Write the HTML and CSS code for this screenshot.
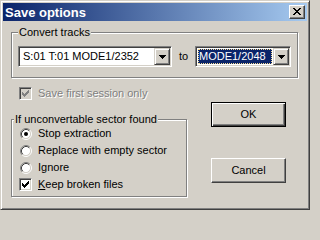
FILE: index.html
```html
<!DOCTYPE html>
<html>
<head>
<meta charset="utf-8">
<title>Save options</title>
<link rel="stylesheet" href="styles.css">
</head>
<body>
<div class="window">
  <div class="titlebar">
    <span class="title">Save options</span>
    <div class="close-btn">
      <svg class="x-glyph" width="8" height="7" viewBox="0 0 8 7" shape-rendering="crispEdges">
        <rect x="0" y="0" width="2" height="1"/><rect x="6" y="0" width="2" height="1"/>
        <rect x="1" y="1" width="2" height="1"/><rect x="5" y="1" width="2" height="1"/>
        <rect x="2" y="2" width="4" height="1"/>
        <rect x="3" y="3" width="2" height="1"/>
        <rect x="2" y="4" width="4" height="1"/>
        <rect x="1" y="5" width="2" height="1"/><rect x="5" y="5" width="2" height="1"/>
        <rect x="0" y="6" width="2" height="1"/><rect x="6" y="6" width="2" height="1"/>
      </svg>
    </div>
  </div>
  <div class="body">
    <div class="group group-convert">
      <span class="legend">Convert tracks</span>
      <div class="convert-row">
        <div class="combo combo-src">
          <span class="combo-text">S:01 T:01 MODE1/2352</span>
          <span class="drop-btn"><svg width="7" height="4" viewBox="0 0 7 4" shape-rendering="crispEdges"><path d="M0 0h7v1h-1v1h-1v1h-1v1h-1v-1h-1v-1h-1v-1h-1z"/></svg></span>
        </div>
        <span class="to">to</span>
        <div class="combo combo-dst">
          <span class="combo-text"><span class="selected">MODE1/2048</span></span>
          <span class="drop-btn"><svg width="7" height="4" viewBox="0 0 7 4" shape-rendering="crispEdges"><path d="M0 0h7v1h-1v1h-1v1h-1v1h-1v-1h-1v-1h-1v-1h-1z"/></svg></span>
        </div>
      </div>
    </div>
    <div class="main">
      <div class="left">
        <div class="check-row first-session disabled">
          <span class="box box-disabled">
            <svg class="check" width="7" height="7" viewBox="0 0 7 7" shape-rendering="crispEdges">
              <rect x="0" y="2" width="1" height="3"/><rect x="1" y="3" width="1" height="3"/><rect x="2" y="4" width="1" height="3"/><rect x="3" y="3" width="1" height="3"/><rect x="4" y="2" width="1" height="3"/><rect x="5" y="1" width="1" height="3"/><rect x="6" y="0" width="1" height="3"/>
            </svg>
          </span>
          <span class="label">Save first session only</span>
        </div>
        <div class="group group-sector">
          <span class="legend">If unconvertable sector found</span>
          <div class="opt-row">
            <span class="radio-wrap"><svg class="radio" width="12" height="12" viewBox="0 0 12 12">
              <circle cx="6" cy="6" r="4.5" fill="#fff"/>
              <path d="M2.11 9.89A5.5 5.5 0 0 1 9.89 2.11" fill="none" stroke="#808080"/>
              <path d="M9.89 2.11A5.5 5.5 0 0 1 2.11 9.89" fill="none" stroke="#fff"/>
              <path d="M2.82 9.18A4.5 4.5 0 0 1 9.18 2.82" fill="none" stroke="#404040"/>
              <path d="M9.18 2.82A4.5 4.5 0 0 1 2.82 9.18" fill="none" stroke="#d4d0c8"/>
              <circle cx="6" cy="6" r="2" fill="#000"/>
            </svg></span>
            <span class="label">Stop extraction</span>
          </div>
          <div class="opt-row">
            <span class="radio-wrap"><svg class="radio" width="12" height="12" viewBox="0 0 12 12">
              <circle cx="6" cy="6" r="4.5" fill="#fff"/>
              <path d="M2.11 9.89A5.5 5.5 0 0 1 9.89 2.11" fill="none" stroke="#808080"/>
              <path d="M9.89 2.11A5.5 5.5 0 0 1 2.11 9.89" fill="none" stroke="#fff"/>
              <path d="M2.82 9.18A4.5 4.5 0 0 1 9.18 2.82" fill="none" stroke="#404040"/>
              <path d="M9.18 2.82A4.5 4.5 0 0 1 2.82 9.18" fill="none" stroke="#d4d0c8"/>
            </svg></span>
            <span class="label">Replace with empty sector</span>
          </div>
          <div class="opt-row">
            <span class="radio-wrap"><svg class="radio" width="12" height="12" viewBox="0 0 12 12">
              <circle cx="6" cy="6" r="4.5" fill="#fff"/>
              <path d="M2.11 9.89A5.5 5.5 0 0 1 9.89 2.11" fill="none" stroke="#808080"/>
              <path d="M9.89 2.11A5.5 5.5 0 0 1 2.11 9.89" fill="none" stroke="#fff"/>
              <path d="M2.82 9.18A4.5 4.5 0 0 1 9.18 2.82" fill="none" stroke="#404040"/>
              <path d="M9.18 2.82A4.5 4.5 0 0 1 2.82 9.18" fill="none" stroke="#d4d0c8"/>
            </svg></span>
            <span class="label">Ignore</span>
          </div>
          <div class="opt-row">
            <span class="box">
              <svg class="check" width="7" height="7" viewBox="0 0 7 7" shape-rendering="crispEdges">
                <rect x="0" y="2" width="1" height="3"/><rect x="1" y="3" width="1" height="3"/><rect x="2" y="4" width="1" height="3"/><rect x="3" y="3" width="1" height="3"/><rect x="4" y="2" width="1" height="3"/><rect x="5" y="1" width="1" height="3"/><rect x="6" y="0" width="1" height="3"/>
              </svg>
            </span>
            <span class="label"><u>K</u>eep broken files</span>
          </div>
        </div>
      </div>
      <div class="right">
        <div class="btn btn-default">OK</div>
        <div class="btn btn-cancel">Cancel</div>
      </div>
    </div>
  </div>
</div>
</body>
</html>
```

FILE: styles.css
```css
html, body {
  margin: 0;
  padding: 0;
  background: #d4d0c8;
}

body {
  font-family: "Liberation Sans", Arial, sans-serif;
  font-size: 11px;
  line-height: 13px;
  color: #000;
}

.window {
  width: 310px;
  height: 210px;
  box-sizing: border-box;
  border: 1px solid;
  border-color: #d4d0c8 #404040 #404040 #d4d0c8;
  box-shadow: inset 1px 1px 0 #fff, inset -1px -1px 0 #808080;
  padding: 2px;
  background: #d4d0c8;
  overflow: hidden;
}

.titlebar {
  height: 18px;
  display: flex;
  align-items: center;
  padding-left: 2px;
  background: linear-gradient(to right, #0a246a, #a6caf0);
}

.title {
  color: #fff;
  font-weight: bold;
  font-size: 13px;
  line-height: 15px;
}

.close-btn {
  margin-left: auto;
  margin-right: 2px;
  width: 16px;
  height: 14px;
  box-sizing: border-box;
  background: #d4d0c8;
  border: 1px solid;
  border-color: #fff #404040 #404040 #fff;
  box-shadow: inset -1px -1px 0 #808080;
  display: flex;
  padding: 2px 0 0 3px;
}

.x-glyph {
  display: block;
  fill: #000;
}

.body {
  padding-left: 8px;
}

.group {
  position: relative;
  box-sizing: border-box;
  border: 1px solid #808080;
  box-shadow: 1px 1px 0 #fff, inset 1px 1px 0 #fff;
}

.legend {
  position: absolute;
  top: -7px;
  background: #d4d0c8;
  padding: 0 1px;
  white-space: nowrap;
  line-height: 13px;
}

.group-convert {
  margin-top: 11px;
  width: 287px;
  height: 46px;
  padding: 13px 6px 0 6px;
}

.group-convert .legend {
  left: 6px;
}

.convert-row {
  display: flex;
  align-items: center;
}

.combo {
  height: 21px;
  box-sizing: border-box;
  border: 1px solid;
  border-color: #808080 #fff #fff #808080;
  box-shadow: inset 1px 1px 0 #404040, inset -1px -1px 0 #d4d0c8;
  padding: 1px;
  background: #fff;
  display: flex;
}

.combo-src {
  width: 154px;
}

.combo-dst {
  width: 96px;
}

.combo-text {
  flex: 1;
  line-height: 17px;
  padding-left: 3px;
  white-space: nowrap;
  overflow: hidden;
  display: flex;
}

.combo-dst .combo-text {
  padding: 1px;
}

.selected {
  flex: 1;
  box-sizing: border-box;
  height: 15px;
  line-height: 13px;
  background: #0a246a;
  color: #fff;
  border: 1px dotted #f5db95;
  padding-left: 0;
}

.drop-btn {
  width: 16px;
  height: 17px;
  box-sizing: border-box;
  background: #d4d0c8;
  border: 1px solid;
  border-color: #d4d0c8 #404040 #404040 #d4d0c8;
  box-shadow: inset 1px 1px 0 #fff, inset -1px -1px 0 #808080;
  display: flex;
  align-items: center;
  justify-content: center;
  padding-top: 1px;
}

.drop-btn svg {
  display: block;
  fill: #000;
}

.to {
  margin: 0 7px;
  width: 9px;
  white-space: nowrap;
}

.main {
  display: flex;
}

.left {
  width: 176px;
}

.check-row,
.opt-row {
  display: flex;
  align-items: center;
}

.first-session {
  margin-top: 9px;
  margin-left: 8px;
  height: 13px;
}

.box {
  width: 13px;
  height: 13px;
  box-sizing: border-box;
  border: 1px solid;
  border-color: #808080 #fff #fff #808080;
  box-shadow: inset 1px 1px 0 #404040, inset -1px -1px 0 #d4d0c8;
  background: #fff;
  display: flex;
  align-items: center;
  justify-content: center;
  flex: none;
}

.box .check {
  display: block;
  fill: #000;
}

.box-disabled {
  background: #d4d0c8;
}

.box-disabled .check {
  fill: #808080;
}

.label {
  margin-left: 6px;
  white-space: nowrap;
}

.disabled .label {
  color: #808080;
  text-shadow: 1px 1px 0 #fff;
}

.group-sector {
  margin-top: 19px;
  width: 176px;
  height: 78px;
  padding: 5px 0 0 7px;
}

.group-sector .legend {
  left: 2px;
}

.opt-row {
  height: 17px;
}

.radio-wrap {
  width: 13px;
  height: 12px;
  display: flex;
  justify-content: flex-end;
  flex: none;
}

.radio {
  display: block;
}

.right {
  margin-left: 24px;
  display: flex;
  flex-direction: column;
}

.btn {
  width: 75px;
  height: 25px;
  box-sizing: border-box;
  display: flex;
  align-items: center;
  justify-content: center;
  background: #d4d0c8;
}

.btn-default {
  margin-top: 24px;
  border: 1px solid #000;
  box-shadow: inset 1px 1px 0 #fff, inset -1px -1px 0 #404040, inset -2px -2px 0 #808080;
}

.btn-cancel {
  margin-top: 31px;
  border: 1px solid;
  border-color: #fff #404040 #404040 #fff;
  box-shadow: inset -1px -1px 0 #808080;
}
```
